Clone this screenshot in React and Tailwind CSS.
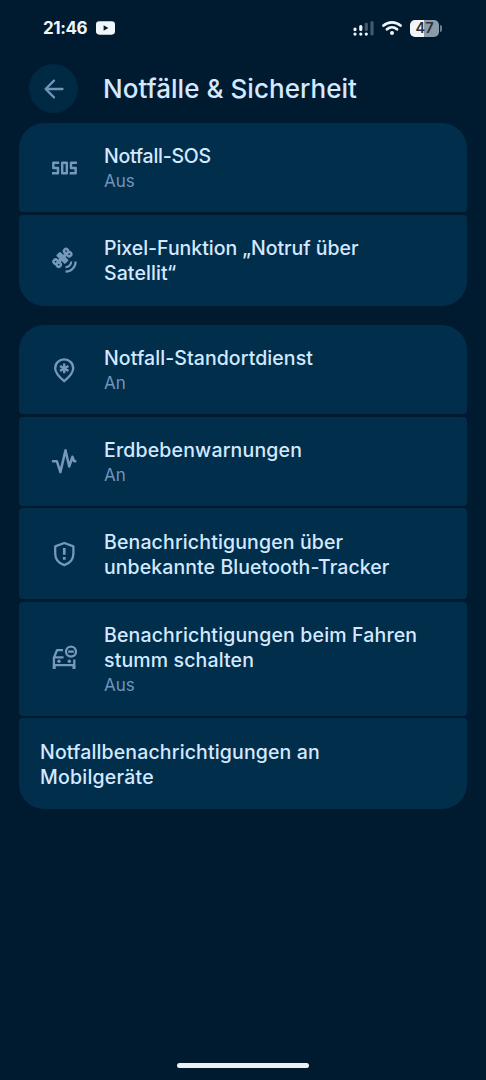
import React from 'react';

const ArrowIcon = () => (
  <svg viewBox="0 0 24 24" className="w-6 h-6" fill="none" stroke="currentColor" strokeWidth="2.3" strokeLinecap="round" strokeLinejoin="round">
    <path d="M20.5 12H4M12 3.6L3.6 12l8.4 8.4" />
  </svg>
);

const SosIcon = () => (
  <svg viewBox="0 0 26 26" className="w-[26px] h-[26px]" fill="none" stroke="currentColor" strokeWidth="2.4" strokeLinejoin="round">
    <path d="M8.2 7.7H2.3V13h4.700v5.300H1" />
    <path d="M11.200 7.700h4.600v10.600h-4.600z" />
    <path d="M25.900 7.700H20V13h4.700v5.300h-6" />
  </svg>
);

const SatelliteIcon = () => (
  <svg viewBox="0 0 26 26" className="w-[26px] h-[26px]" fill="none" stroke="currentColor" strokeWidth="2.2">
    <g transform="translate(11.4 10.9) rotate(-45)">
      <rect x="-2.8" y="-6.2" width="5.6" height="12.4" rx="1" fill="currentColor" stroke="none" />
      <path d="M-5 0H5" strokeWidth="3.4" />
      <g strokeWidth="2.5">
        <circle cx="-7.4" cy="-2.2" r="2.1" />
        <circle cx="-7.4" cy="2.2" r="2.1" />
        <circle cx="7.4" cy="-2.2" r="2.1" />
        <circle cx="7.4" cy="2.2" r="2.1" />
      </g>
    </g>
    <path d="M14.5 20.2a5.6 5.6 0 0 0 5.700-5.700M14.500 24.600a10 10 0 0 0 10.100-10.100" />
  </svg>
);

const LocationIcon = () => (
  <svg viewBox="0 0 26 26" className="w-[26px] h-[26px]" fill="none" stroke="currentColor" strokeWidth="2.3">
    <path d="M13.2 24.2c-6-5.2-9-9.3-9-12.8C4.2 6 8.3 2.4 13.2 2.4s9 3.6 9 9c0 3.500-3 7.600-9 12.800z" strokeLinejoin="round" />
    <path d="M13.2 6.500v9.800M8.950 8.950l8.500 4.900M17.450 8.950l-8.500 4.900" strokeWidth="2.4" />
  </svg>
);

const QuakeIcon = () => (
  <svg viewBox="0 0 26 26" className="w-[26px] h-[26px]" fill="none" stroke="currentColor" strokeWidth="2.5" strokeLinecap="round" strokeLinejoin="round">
    <path d="M2 13.3h3.900l3.500 10.800 5.100-21.800 3.700 16.200 3.200-9.700 1.700 4.500h1.200" />
  </svg>
);

const ShieldIcon = () => (
  <svg viewBox="0 0 26 26" className="w-[26px] h-[26px]" fill="none" stroke="currentColor" strokeWidth="2.3" strokeLinejoin="round">
    <path d="M13.3 2l9.100 3.400v7.100c0 5.500-3.700 9.900-9.100 11.700-5.400-1.800-9.100-6.200-9.100-11.700V5.400z" />
    <path d="M13.3 6.900v6.800M13.300 16v2.800" strokeWidth="2.7" />
  </svg>
);

const CarIcon = () => (
  <svg viewBox="0 0 26 26" className="w-[26px] h-[26px] -mt-[2px]" fill="none" stroke="currentColor" strokeWidth="2.3" strokeLinejoin="round">
    <path d="M12 5.200H6L2.900 12.700v9M12.500 12.300H3M2.900 20.200h20.400M23.300 21.700v-7.200" />
    <path d="M3.200 23.900v-3M23 23.900v-3" strokeWidth="3" />
    <circle cx="8" cy="16.200" r="1.700" fill="currentColor" stroke="none" />
    <circle cx="18.300" cy="16.200" r="1.700" fill="currentColor" stroke="none" />
    <circle cx="20" cy="6.600" r="5" />
    <path d="M17.200 6.600h5.600" />
  </svg>
);

const groups = [
  [
    { icon: <SosIcon />, lines: [['Notfall-SOS', 'tracking-[-0.27px]']], status: 'Aus', height: 'h-[89px]' },
    {
      icon: <SatelliteIcon />,
      lines: [['Pixel-Funktion „Notruf über', 'tracking-[-0.03px]'], ['Satellit“', 'tracking-[0.1px]']],
      height: 'h-[91px]',
    },
  ],
  [
    { icon: <LocationIcon />, lines: [['Notfall-Standortdienst', 'tracking-[0.08px]']], status: 'An', height: 'h-[89px]' },
    { icon: <QuakeIcon />, lines: [['Erdbebenwarnungen', 'tracking-[0.17px]']], status: 'An', height: 'h-[89px]' },
    {
      icon: <ShieldIcon />,
      lines: [['Benachrichtigungen über', 'tracking-[0.14px]'], ['unbekannte Bluetooth-Tracker', 'tracking-[0.08px]']],
      height: 'h-[91px]',
    },
    {
      icon: <CarIcon />,
      lines: [['Benachrichtigungen beim Fahren', 'tracking-[0.16px]'], ['stumm schalten', 'tracking-[0.14px]']],
      status: 'Aus',
      height: 'h-[114px]',
    },
    { lines: [['Notfallbenachrichtigungen an', 'tracking-[0.14px]'], ['Mobilgeräte', 'tracking-[0.22px]']], height: 'h-[91px]' },
  ],
];

const StatusBar = () => (
  <header className="h-14 flex items-center justify-between pl-[43px] pr-[44px] text-[#f1f6fb]">
    <div className="flex items-center gap-[9px]">
      <span className="w-[44px] text-[17px] font-bold leading-6 tracking-[-0.4px]">21:46</span>
      <svg viewBox="0 0 20 14" className="w-[19px] h-[14px]">
        <rect width="20" height="14" rx="3.5" fill="currentColor" />
        <path d="M8 4.200v5.600L13 7z" fill="#001b30" />
      </svg>
    </div>
    <div className="flex items-center">
      <svg viewBox="0 0 21 16" className="w-[21px] h-4" fill="none" strokeWidth="3.200" strokeLinecap="round">
        <path d="M2 9v.6M7.800 6.500v3M2 14v.1M7.800 14v.1M13.300 14v.1" stroke="currentColor" />
        <path d="M13.300 4v5.500M19 2.500V14" stroke="#46586a" />
      </svg>
      <svg viewBox="0 0 20 16" className="w-5 h-4 ml-2" fill="none" stroke="currentColor" strokeWidth="2.700" strokeLinecap="round">
        <path d="M1.500 5.500c5-4.300 12-4.300 17 0M5 9.300c3-2.600 7-2.600 10 0" />
        <circle cx="10" cy="13" r="2" fill="currentColor" stroke="none" />
      </svg>
      <div className="ml-2 w-[29px] h-[17px] rounded-[5px] flex items-center justify-center bg-linear-to-r from-[#f1f6fb] from-50% to-[#8c9ba8] to-50%">
        <span className="text-[14.5px] leading-none font-semibold text-[#2a3138]">47</span>
      </div>
      <div className="ml-px w-0.5 h-[7px] rounded-r bg-[#6e7e8c]" />
    </div>
  </header>
);

const Row = ({ item }) => (
  <div className={`${item.height} flex items-center bg-[#002e4b] rounded-[4px] first:rounded-t-[25px] last:rounded-b-[25px]`}>
    {item.icon && <div className="w-[85px] pl-8 text-[#7598bc]">{item.icon}</div>}
    <div className={item.icon ? 'pt-0.5' : 'pt-0.5 pl-[21px]'}>
      {item.lines.map(([text, tracking]) => (
        <p key={text} className={`text-[19.5px] leading-[25px] font-medium text-[#d4e8ff] whitespace-nowrap ${tracking}`}>
          {text}
        </p>
      ))}
      {item.status && <p className="text-[17px] leading-6 text-[#7095ba]">{item.status}</p>}
    </div>
  </div>
);

const App = () => (
  <div className="w-[486px] h-[1080px] flex flex-col bg-[#001b30] font-['Inter',sans-serif] overflow-hidden">
    <StatusBar />
    <div className="h-[67px] pt-2 pl-[29px] flex items-start gap-[25px]">
      <button className="w-[49px] h-[49px] rounded-full bg-[#002944] text-[#7095ba] flex items-center justify-center">
        <ArrowIcon />
      </button>
      <h1 className="text-[26px] leading-[50px] tracking-[0.05px] font-medium text-[#d4e8ff] whitespace-nowrap">Notfälle &amp; Sicherheit</h1>
    </div>
    <main className="px-[19px] flex flex-col gap-[19.5px]">
      {groups.map((items, i) => (
        <section key={i} className="flex flex-col gap-[2.5px]">
          {items.map(item => (
            <Row key={item.lines[0][0]} item={item} />
          ))}
        </section>
      ))}
    </main>
    <div className="mt-auto mb-3 mx-auto w-[132px] h-[5px] rounded-full bg-[#edf0f2]" />
  </div>
);

export default App;
